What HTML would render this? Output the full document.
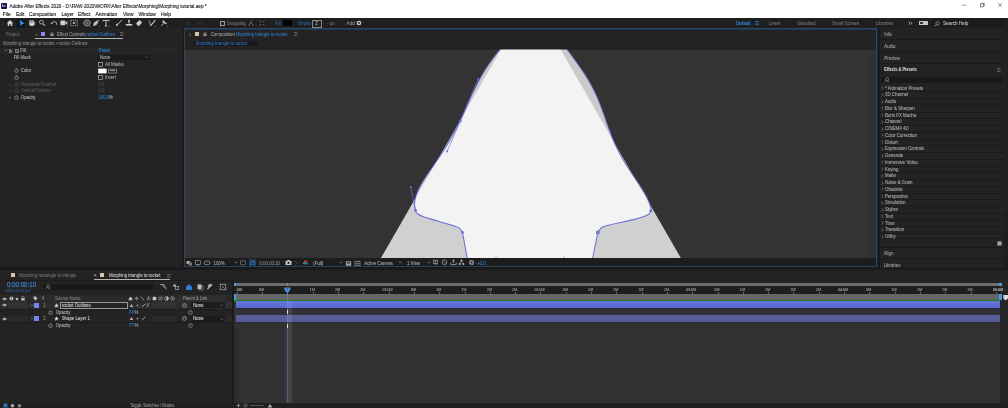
<!DOCTYPE html>
<html><head><meta charset="utf-8"><style>
html,body{margin:0;padding:0;width:1008px;height:408px;overflow:hidden;background:#1a1a1a;}
body{position:relative;font-family:"Liberation Sans",sans-serif;}
div,svg{position:absolute;box-sizing:content-box;}
.t{white-space:pre;line-height:8px;height:8px;transform:scaleY(1.15);-webkit-text-stroke:0.1px currentColor;}
</style></head><body><div style="left:0;top:0;width:1008px;height:408px;will-change:transform;overflow:hidden;filter:blur(0.22px)">
<div style="left:0px;top:0px;width:1008px;height:18px;background:#ffffff;"></div>
<div style="left:1px;top:2.5px;width:6px;height:6px;background:#22104a;border-radius:0.8px"></div>
<div class="t" style="left:1.6px;top:1.6px;font-size:3.1px;color:#b4a4ff;font-weight:bold">Ae</div>
<div class="t" style="left:9.5px;top:2.50px;font-size:4.72px;color:#1a1a1a;">Adobe After Effects 2020 - D:\RAW-2020\WORK\After Effects\Morphing\Morphing tutorial.aep *</div>
<div class="t" style="left:2.8px;top:10.50px;font-size:4.9px;color:#111111;">File</div>
<div class="t" style="left:16px;top:10.50px;font-size:4.9px;color:#111111;">Edit</div>
<div class="t" style="left:29px;top:10.50px;font-size:4.9px;color:#111111;">Composition</div>
<div class="t" style="left:61.5px;top:10.50px;font-size:4.9px;color:#111111;">Layer</div>
<div class="t" style="left:78px;top:10.50px;font-size:4.9px;color:#111111;">Effect</div>
<div class="t" style="left:95.5px;top:10.50px;font-size:4.9px;color:#111111;">Animation</div>
<div class="t" style="left:123px;top:10.50px;font-size:4.9px;color:#111111;">View</div>
<div class="t" style="left:138.5px;top:10.50px;font-size:4.9px;color:#111111;">Window</div>
<div class="t" style="left:161px;top:10.50px;font-size:4.9px;color:#111111;">Help</div>
<svg style="left:960px;top:2px" width="48" height="8" viewBox="0 0 48 8"><path d="M2 3.2H6.6" stroke="#777" stroke-width="0.7"/><rect x="20.6" y="1.9" width="3" height="3" fill="none" stroke="#444" stroke-width="0.6"/><path d="M21.4 1.2H24.3V4.1" stroke="#444" stroke-width="0.6" fill="none"/><path d="M38.2 1.2L42 5M42 1.2L38.2 5" stroke="#444" stroke-width="0.6"/></svg>
<div style="left:0px;top:18px;width:1008px;height:10.3px;background:#1f1f1f;"></div>
<div style="left:16px;top:19.4px;width:10.2px;height:8.2px;background:#121820;"></div>
<svg style="left:5.5px;top:19px" width="8" height="8" viewBox="-4 -4 8 8"><path d="M-3.3 0.2L0 -3L3.3 0.2L2.3 0.2V3H0.8V1.2H-0.8V3H-2.3V0.2Z" fill="#d0d0d0"/></svg>
<svg style="left:18px;top:19px" width="8" height="8" viewBox="-4 -4 8 8"><path d="M-2.3 -3L2.6 0.7L0.4 0.9L-1.3 3.1Z" fill="#3a92f2"/></svg>
<svg style="left:27.5px;top:19px" width="8" height="8" viewBox="-4 -4 8 8"><path d="M-2.4 -0.3V-2.2M-1.1 -0.3V-3M0.2 -0.3V-3M1.5 -0.3V-2.4" stroke="#cfcfcf" stroke-width="1"/><path d="M-2.8 -0.5H2.6V1.6L1.4 3H-1.6L-2.8 1.6Z" fill="#cfcfcf"/><path d="M2.2 0.5L3.2 -0.8" stroke="#cfcfcf" stroke-width="0.9"/></svg>
<svg style="left:37.5px;top:19px" width="8" height="8" viewBox="-4 -4 8 8"><circle cx="-0.6" cy="-0.9" r="1.9" stroke="#bdbdbd" stroke-width="0.8" fill="none"/><path d="M0.8 0.6L3 3" stroke="#bdbdbd" stroke-width="1.1"/></svg>
<svg style="left:50.3px;top:19px" width="8" height="8" viewBox="-4 -4 8 8"><path d="M-2.6 1A2.7 2.7 0 1 1 2.8 1.8" stroke="#bdbdbd" stroke-width="0.9" fill="none"/><path d="M-3.6 -0.3L-2.6 1.6L-1.2 0.2Z" fill="#bdbdbd"/></svg>
<svg style="left:60.2px;top:19px" width="8" height="8" viewBox="-4 -4 8 8"><rect x="-3.6" y="-2.4" width="5" height="4.6" rx="1" fill="#d0d0d0"/><path d="M1.2 0L3.4 -2V2Z" fill="#d0d0d0"/><circle cx="3.2" cy="3.2" r="0.5" fill="#888"/></svg>
<svg style="left:70.2px;top:19px" width="8" height="8" viewBox="-4 -4 8 8"><rect x="-3.3" y="-2.7" width="6.6" height="5.4" stroke="#bdbdbd" stroke-width="0.9" stroke-dasharray="1.2 1" fill="none"/><rect x="-1.2" y="-1" width="2.4" height="2" fill="#bdbdbd"/><rect x="-0.5" y="-0.4" width="1" height="0.8" fill="#232323"/></svg>
<svg style="left:82.5px;top:19px" width="8" height="8" viewBox="-4 -4 8 8"><path d="M-1.8 -2.8H1.8L3.4 0L1.8 2.8H-1.8L-3.4 0Z" stroke="#a8a8a8" stroke-width="0.9" fill="#3a3a3a"/><ellipse rx="1.3" ry="0.9" fill="none" stroke="#a8a8a8" stroke-width="0.5"/><circle cx="3.3" cy="3.4" r="0.5" fill="#888"/></svg>
<svg style="left:92.3px;top:19px" width="8" height="8" viewBox="-4 -4 8 8"><path d="M-3 3L-2.2 -0.2L1 -2.4L2.4 -1L0.2 2.2Z" fill="#c0c0c0"/><path d="M1.6 -2.2L2.6 -3.2L3.4 -2.4L2.4 -1.4Z" fill="#c0c0c0"/><circle cx="3" cy="3.2" r="0.5" fill="#888"/></svg>
<svg style="left:102.2px;top:19px" width="8" height="8" viewBox="-4 -4 8 8"><path d="M-3 -2.6H3M0 -2.6V3M-1.2 3H1.2M-3 -2.6V-1.6M3 -2.6V-1.6" stroke="#cfcfcf" stroke-width="0.9" fill="none"/><circle cx="3.3" cy="3.3" r="0.5" fill="#888"/></svg>
<svg style="left:115.2px;top:19px" width="8" height="8" viewBox="-4 -4 8 8"><path d="M-1.2 1.2L3.2 -3.2" stroke="#cfcfcf" stroke-width="0.9"/><path d="M-3.2 3.2Q-3 0.8 -1.6 0.6L-0.6 1.6Q-1 3 -3.2 3.2Z" fill="#cfcfcf"/></svg>
<svg style="left:125px;top:19px" width="8" height="8" viewBox="-4 -4 8 8"><circle cy="-2.3" r="1" fill="#cfcfcf"/><path d="M0 -1.5V0.6" stroke="#cfcfcf" stroke-width="1.2"/><path d="M-3.2 1H3.2V2.6H-3.2Z" fill="#cfcfcf"/></svg>
<svg style="left:135.3px;top:19px" width="8" height="8" viewBox="-4 -4 8 8"><path d="M-3 0.6L0.6 -3L3.2 -0.4L-0.4 3.2Z" fill="#cfcfcf"/><path d="M-3 0.6L-0.4 3.2" stroke="#888" stroke-width="0.6"/></svg>
<svg style="left:147.9px;top:19px" width="8" height="8" viewBox="-4 -4 8 8"><path d="M-3 -2.6L-1.2 2.4" stroke="#a0a0a0" stroke-width="0.9"/><path d="M-0.8 2.2L3.4 -3" stroke="#cfcfcf" stroke-width="1.1"/><path d="M-1.6 1.6L-0.4 2.8L-1.8 3.2Z" fill="#cfcfcf"/><circle cx="3.2" cy="3.4" r="0.5" fill="#888"/></svg>
<svg style="left:159.8px;top:19px" width="8" height="8" viewBox="-4 -4 8 8"><path d="M-1 -3L3 0.8L1.6 1.2L-0.6 -0.6L-1.8 -0.2Z" fill="#cfcfcf"/><path d="M-0.2 0.2L-2.8 2.8" stroke="#cfcfcf" stroke-width="0.8"/><circle cx="3.2" cy="3.4" r="0.5" fill="#888"/></svg>
<div style="left:2.2px;top:20px;width:0.5px;height:6.5px;background:#2e2e2e;"></div>
<div style="left:186px;top:21.5px;width:5px;height:3.5px;background:#2a2a2a;"></div>
<div style="left:197px;top:21.5px;width:5px;height:3.5px;background:#2a2a2a;"></div>
<div style="left:219.6px;top:20.8px;width:3.6px;height:3.6px;border:0.7px solid #9a9a9a"></div>
<div class="t" style="left:226.5px;top:19.70px;font-size:4.6px;color:#6a6a6a;">Snapping</div>
<svg style="left:248px;top:19.5px" width="6" height="7" viewBox="0 0 6 7"><path d="M0.5 6L3 2L5.5 6M3 1L4.5 0" stroke="#8a8a8a" stroke-width="0.7" fill="none"/></svg>
<svg style="left:258.5px;top:20px" width="6" height="6" viewBox="0 0 6 6"><path d="M0.5 0.5L2 2M5.5 0.5L4 2M0.5 5.5L2 4M5.5 5.5L4 4" stroke="#8a8a8a" stroke-width="0.7"/></svg>
<div class="t" style="left:275px;top:19.70px;font-size:4.6px;color:#2d5f98;">Fill</div>
<div style="left:283px;top:20.3px;width:9px;height:6px;background:#000000;"></div>
<div class="t" style="left:298px;top:19.70px;font-size:4.6px;color:#2d5f98;">Stroke</div>
<div style="left:312px;top:20.2px;width:8px;height:5.6px;border:0.6px solid #8a8a8a"></div>
<div class="t" style="left:315.3px;top:19.70px;font-size:4.6px;color:#b0b0b0;">2</div>
<div class="t" style="left:327px;top:19.70px;font-size:4.6px;color:#6a6a6a;">- px</div>
<div class="t" style="left:346.6px;top:19.70px;font-size:4.6px;color:#8a8a8a;">Add:</div>
<svg style="left:355.5px;top:20px" width="6" height="6" viewBox="0 0 6 6"><circle cx="3" cy="3" r="2.3" fill="#c8c8c8"/><circle cx="3" cy="3" r="0.9" fill="#232323"/></svg>
<div class="t" style="left:736px;top:19.70px;font-size:4.6px;color:#2f8ae6;">Default</div>
<svg style="left:755px;top:21px" width="4" height="4" viewBox="0 0 4 4"><path d="M0 0.5H4M0 2H4M0 3.5H4" stroke="#2f8ae6" stroke-width="0.6"/></svg>
<div class="t" style="left:768.8px;top:19.70px;font-size:4.6px;color:#6e6e6e;">Learn</div>
<div class="t" style="left:797px;top:19.70px;font-size:4.6px;color:#6e6e6e;">Standard</div>
<div class="t" style="left:832px;top:19.70px;font-size:4.6px;color:#6e6e6e;">Small Screen</div>
<div class="t" style="left:875.8px;top:19.70px;font-size:4.6px;color:#6e6e6e;">Libraries</div>
<svg style="left:908px;top:20.5px" width="5" height="5" viewBox="0 0 5 5"><path d="M0.6 0.8L2 2.2L0.6 3.6M2.6 0.8L4 2.2L2.6 3.6" stroke="#d8d8d8" stroke-width="0.7" fill="none"/></svg>
<div style="left:918.7px;top:21px;width:9px;height:4.2px;background:#c8c8c8;border-radius:0.5px"></div>
<div style="left:920.2px;top:21.8px;width:3px;height:2.6px;background:#333;"></div>
<div style="left:932px;top:19.3px;width:72px;height:8px;background:#1b1b1b;"></div>
<svg style="left:933.5px;top:20.5px" width="6" height="6" viewBox="0 0 6 6"><circle cx="3.6" cy="2.4" r="1.7" stroke="#bdbdbd" stroke-width="0.6" fill="none"/><path d="M2.4 3.6L0.6 5.4" stroke="#bdbdbd" stroke-width="0.7"/></svg>
<div class="t" style="left:943px;top:19.70px;font-size:4.6px;color:#bdbdbd;">Search Help</div>
<div style="left:0px;top:28.3px;width:183px;height:239.2px;background:#232323;"></div>
<div style="left:176px;top:39px;width:2px;height:228.5px;background:#25262a;"></div>
<div style="left:183px;top:28.3px;width:1px;height:239.2px;background:#161616;"></div>
<div class="t" style="left:5.7px;top:30.70px;font-size:4.5px;color:#666666;">Project</div>
<div class="t" style="left:35.8px;top:30.30px;font-size:5px;color:#8a8a8a;">&#8250;</div>
<div style="left:41.4px;top:32px;width:3.3px;height:3.6px;background:#8c88e8;"></div>
<svg style="left:49.5px;top:31.6px" width="4" height="4.5" viewBox="0 0 4 4.5"><rect x="0.5" y="1.6" width="3" height="2.6" fill="#9a9a9a"/><path d="M1 1.8V0.9A1 1 0 0 1 3 0.9V1.8" stroke="#9a9a9a" stroke-width="0.5" fill="none"/></svg>
<div class="t" style="left:57px;top:30.70px;font-size:4.35px;color:#8f8f8f;">Effect Controls </div>
<div class="t" style="left:86.2px;top:30.70px;font-size:4.35px;color:#3570b8;">rocket Outlines</div>
<svg style="left:119.8px;top:32px" width="4" height="4" viewBox="0 0 4 4"><path d="M0 0.5H3.5M0 2H3.5M0 3.5H3.5" stroke="#777" stroke-width="0.6"/></svg>
<div style="left:35px;top:38.1px;width:88px;height:0.7px;background:#b4b4b4;"></div>
<div style="left:0px;top:39px;width:176px;height:8px;background:#232323;"></div>
<div class="t" style="left:3px;top:40.20px;font-size:4.35px;color:#7e7e7e;">Morphing triangle to rocket &#8226; rocket Outlines</div>
<div style="left:0px;top:47px;width:176px;height:0.6px;background:#1e1e1e;"></div>
<div style="left:0px;top:47.5px;width:176px;height:6.2px;background:#262626;"></div>
<svg style="left:3.7px;top:48.7px" width="4" height="3" viewBox="0 0 4 3"><path d="M0.6 0.6L2 2.1L3.4 0.6" stroke="#9a9a9a" stroke-width="0.6" fill="none"/></svg>
<div class="t" style="left:8.7px;top:47.10px;font-size:5px;color:#b0b0b0;"><i>fx</i></div>
<svg style="left:15px;top:48.5px" width="4" height="4" viewBox="0 0 4 4"><rect x="0.3" y="0.8" width="3.4" height="2.8" fill="none" stroke="#b0b0b0" stroke-width="0.6"/><path d="M2 0.8V3.6" stroke="#b0b0b0" stroke-width="0.5"/></svg>
<div class="t" style="left:20.2px;top:47.10px;font-size:4.35px;color:#a8a8a8;">Fill</div>
<div class="t" style="left:98.5px;top:47.10px;font-size:4.35px;color:#2f7ed0;">Reset</div>
<div class="t" style="left:13.7px;top:53.90px;font-size:4.35px;color:#a8a8a8;">Fill Mask</div>
<div style="left:98px;top:55.2px;width:52px;height:4.8px;background:#1b1b1b;"></div>
<div class="t" style="left:100px;top:54.10px;font-size:4.35px;color:#a8a8a8;">None</div>
<svg style="left:144.5px;top:56.2px" width="3" height="2.5" viewBox="0 0 3 2.5"><path d="M0.3 0.5L1.5 1.8L2.7 0.5" stroke="#9a9a9a" stroke-width="0.5" fill="none"/></svg>
<svg style="left:98px;top:61.8px" width="5" height="5" viewBox="0 0 5 5"><rect x="0.6" y="0.6" width="3.8" height="3.8" fill="none" stroke="#b0b0b0" stroke-width="0.7"/></svg>
<div class="t" style="left:105px;top:60.70px;font-size:4.35px;color:#a0a0a0;">All Masks</div>
<svg style="left:14.0px;top:68.3px" width="5" height="5" viewBox="0 0 5 5"><circle cx="2.5" cy="2.8" r="1.8" fill="none" stroke="#b0b0b0" stroke-width="0.6"/><path d="M2.5 0.4V1M2.5 2.8L3.3 2.1" stroke="#b0b0b0" stroke-width="0.6"/></svg>
<div class="t" style="left:20.8px;top:67.30px;font-size:4.35px;color:#a8a8a8;">Color</div>
<svg style="left:98px;top:68px" width="20" height="6" viewBox="0 0 20 6"><rect x="0.2" y="0.6" width="8.4" height="4.8" fill="#ffffff"/><rect x="10.6" y="1.2" width="7.8" height="3.8" fill="none" stroke="#a8a8a8" stroke-width="0.6"/><path d="M12 2.6H17" stroke="#a8a8a8" stroke-width="0.9"/></svg>
<svg style="left:14.0px;top:75.0px" width="5" height="5" viewBox="0 0 5 5"><circle cx="2.5" cy="2.8" r="1.8" fill="none" stroke="#b0b0b0" stroke-width="0.6"/><path d="M2.5 0.4V1M2.5 2.8L3.3 2.1" stroke="#b0b0b0" stroke-width="0.6"/></svg>
<svg style="left:98px;top:75.2px" width="5" height="5" viewBox="0 0 5 5"><rect x="0.6" y="0.6" width="3.8" height="3.8" fill="none" stroke="#b0b0b0" stroke-width="0.7"/></svg>
<div class="t" style="left:105px;top:74.10px;font-size:4.35px;color:#a0a0a0;">Invert</div>
<div class="t" style="left:9.2px;top:80.70px;font-size:4.5px;color:#5a5a5a;">&#8250;</div>
<svg style="left:14.0px;top:81.9px" width="5" height="5" viewBox="0 0 5 5"><circle cx="2.5" cy="2.8" r="1.8" fill="none" stroke="#555" stroke-width="0.6"/><path d="M2.5 0.4V1M2.5 2.8L3.3 2.1" stroke="#555" stroke-width="0.6"/></svg>
<div class="t" style="left:20.8px;top:80.90px;font-size:4.35px;color:#555555;">Horizontal Feather</div>
<div class="t" style="left:98.5px;top:80.90px;font-size:4.35px;color:#4e4e4e;">0.0</div>
<div class="t" style="left:9.2px;top:87.30px;font-size:4.5px;color:#5a5a5a;">&#8250;</div>
<svg style="left:14.0px;top:88.4px" width="5" height="5" viewBox="0 0 5 5"><circle cx="2.5" cy="2.8" r="1.8" fill="none" stroke="#555" stroke-width="0.6"/><path d="M2.5 0.4V1M2.5 2.8L3.3 2.1" stroke="#555" stroke-width="0.6"/></svg>
<div class="t" style="left:20.8px;top:87.40px;font-size:4.35px;color:#555555;">Vertical Feather</div>
<div class="t" style="left:98.5px;top:87.40px;font-size:4.35px;color:#4e4e4e;">0.0</div>
<div class="t" style="left:9.2px;top:93.70px;font-size:4.5px;color:#a0a0a0;">&#8250;</div>
<svg style="left:14.0px;top:94.9px" width="5" height="5" viewBox="0 0 5 5"><circle cx="2.5" cy="2.8" r="1.8" fill="none" stroke="#b0b0b0" stroke-width="0.6"/><path d="M2.5 0.4V1M2.5 2.8L3.3 2.1" stroke="#b0b0b0" stroke-width="0.6"/></svg>
<div class="t" style="left:20.8px;top:93.90px;font-size:4.35px;color:#a8a8a8;">Opacity</div>
<div class="t" style="left:98.3px;top:93.90px;font-size:4.35px;color:#2f7ed0;">100.0</div>
<div class="t" style="left:109px;top:93.90px;font-size:4.35px;color:#a0a0a0;">%</div>
<div style="left:184px;top:28px;width:693px;height:239px;background:#232323;"></div>
<div class="t" style="left:189.3px;top:30.30px;font-size:5px;color:#8a8a8a;">&#8250;</div>
<div style="left:195.4px;top:32px;width:3.4px;height:3.6px;background:#d8c6a8;"></div>
<svg style="left:203px;top:31.6px" width="4" height="4.5" viewBox="0 0 4 4.5"><rect x="0.5" y="1.6" width="3" height="2.6" fill="#9a9a9a"/><path d="M1 1.8V0.9A1 1 0 0 1 3 0.9V1.8" stroke="#9a9a9a" stroke-width="0.5" fill="none"/></svg>
<div class="t" style="left:210.7px;top:30.50px;font-size:4.35px;color:#8f8f8f;">Composition </div>
<div class="t" style="left:236px;top:30.50px;font-size:4.35px;color:#3570b8;">Morphing triangle to rocket</div>
<svg style="left:293.5px;top:32px" width="4" height="4" viewBox="0 0 4 4"><path d="M0 0.5H3.5M0 2H3.5M0 3.5H3.5" stroke="#777" stroke-width="0.6"/></svg>
<div style="left:193px;top:41.4px;width:65px;height:5px;background:#191919;"></div>
<div class="t" style="left:195.8px;top:40.30px;font-size:4.35px;color:#2e66b0;">Morphing triangle to rocket</div>
<div style="left:185px;top:49.5px;width:691px;height:208.8px;background:#333436;"></div>
<div style="left:190px;top:49.5px;width:680.4px;height:208.8px;background:#333333;"></div>
<div style="left:870.4px;top:49.5px;width:5.4px;height:208.8px;background:#303030;"></div>
<svg style="left:0;top:0" width="1008" height="408" viewBox="0 0 1008 408">
<defs><filter id="bl" x="-1%" y="-1%" width="102%" height="102%"><feGaussianBlur stdDeviation="0.35"/></filter><clipPath id="vc"><rect x="190" y="49.5" width="678" height="208.8"/></clipPath></defs>
<g clip-path="url(#vc)"><g filter="url(#bl)">
<path d="M530.8 -2.2 L380.8 258.3 L681 258.3 Z" fill="#ffffff" fill-opacity="0.77"/>
<path d="M507.75 40.00 L506.52 41.50 L505.28 43.00 L504.05 44.50 L502.82 46.00 L501.59 47.50 L500.35 49.00 L499.12 50.50 L497.91 52.00 L496.71 53.50 L495.54 55.00 L494.39 56.50 L493.26 58.00 L492.15 59.50 L491.06 61.00 L490.00 62.50 L488.96 64.00 L487.94 65.50 L486.94 67.00 L485.97 68.50 L485.01 70.00 L484.08 71.50 L483.17 73.00 L482.27 74.50 L481.40 76.00 L480.55 77.50 L479.71 79.00 L478.89 80.50 L478.09 82.00 L477.31 83.50 L476.54 85.00 L475.78 86.50 L475.04 88.00 L474.31 89.50 L473.59 91.00 L472.88 92.50 L472.18 94.00 L471.49 95.50 L470.80 97.00 L470.13 98.50 L469.46 100.00 L468.79 101.50 L468.12 103.00 L467.46 104.50 L466.80 106.00 L466.14 107.50 L465.48 109.00 L464.81 110.50 L464.14 112.00 L463.47 113.50 L462.80 115.00 L462.12 116.50 L461.43 118.00 L460.73 119.50 L460.03 121.00 L459.31 122.50 L458.59 124.00 L457.85 125.50 L457.11 127.00 L456.35 128.50 L455.58 130.00 L454.79 131.50 L454.00 133.00 L453.19 134.50 L452.36 136.00 L451.52 137.50 L450.67 139.00 L449.80 140.50 L448.92 142.00 L448.02 143.50 L447.11 145.00 L446.18 146.50 L445.24 148.00 L444.29 149.50 L443.32 151.00 L442.35 152.50 L441.36 154.00 L440.36 155.50 L439.35 157.00 L438.33 158.50 L437.30 160.00 L436.27 161.50 L435.24 163.00 L434.20 164.50 L433.16 166.00 L432.12 167.50 L431.08 169.00 L430.05 170.50 L429.02 172.00 L428.01 173.50 L427.00 175.00 L426.01 176.50 L425.04 178.00 L424.08 179.50 L423.15 181.00 L422.25 182.50 L421.37 184.00 L420.53 185.50 L419.73 187.00 L418.96 188.50 L418.25 190.00 L417.58 191.50 L416.97 193.00 L416.41 194.50 L415.92 196.00 L415.50 197.50 L415.15 199.00 L414.89 200.50 L414.71 202.00 L414.61 203.50 L414.62 205.00 L414.73 206.50 L414.95 208.00 L415.29 209.50 L415.40 210.30 C415.73 210.87 415.85 212.55 417.40 213.70 C418.95 214.85 421.85 216.13 424.70 217.20 C427.55 218.27 431.23 219.13 434.50 220.10 C437.77 221.07 441.03 222.02 444.30 223.00 C447.57 223.98 451.57 225.10 454.10 226.00 C456.63 226.90 458.10 227.33 459.50 228.40 C460.90 229.47 462.00 231.73 462.50 232.40 L467.2 262 L592.6 262 L597.8 232.4 C598.47 231.58 599.83 228.73 601.80 227.50 C603.77 226.27 606.67 225.80 609.60 225.00 C612.53 224.20 616.13 223.43 619.40 222.70 C622.67 221.97 625.93 221.37 629.20 220.60 C632.47 219.83 635.73 219.17 639.00 218.10 C642.27 217.03 646.83 215.42 648.80 214.20 C650.77 212.98 650.47 211.37 650.80 210.80 L650.98 209.50 L650.75 208.00 L650.43 206.50 L650.03 205.00 L649.55 203.50 L649.00 202.00 L648.38 200.50 L647.70 199.00 L646.98 197.50 L646.20 196.00 L645.38 194.50 L644.52 193.00 L643.63 191.50 L642.71 190.00 L641.77 188.50 L640.81 187.00 L639.82 185.50 L638.83 184.00 L637.83 182.50 L636.82 181.00 L635.80 179.50 L634.79 178.00 L633.77 176.50 L632.76 175.00 L631.76 173.50 L630.76 172.00 L629.77 170.50 L628.80 169.00 L627.83 167.50 L626.88 166.00 L625.95 164.50 L625.03 163.00 L624.13 161.50 L623.25 160.00 L622.38 158.50 L621.53 157.00 L620.71 155.50 L619.90 154.00 L619.11 152.50 L618.34 151.00 L617.59 149.50 L616.86 148.00 L616.14 146.50 L615.45 145.00 L614.77 143.50 L614.11 142.00 L613.47 140.50 L612.84 139.00 L612.22 137.50 L611.62 136.00 L611.04 134.50 L610.46 133.00 L609.90 131.50 L609.34 130.00 L608.80 128.50 L608.26 127.00 L607.73 125.50 L607.20 124.00 L606.67 122.50 L606.15 121.00 L605.63 119.50 L605.11 118.00 L604.59 116.50 L604.07 115.00 L603.54 113.50 L603.00 112.00 L602.46 110.50 L601.91 109.00 L601.35 107.50 L600.79 106.00 L600.21 104.50 L599.61 103.00 L599.01 101.50 L598.39 100.00 L597.75 98.50 L597.10 97.00 L596.43 95.50 L595.74 94.00 L595.03 92.50 L594.31 91.00 L593.56 89.50 L592.79 88.00 L592.00 86.50 L591.20 85.00 L590.37 83.50 L589.51 82.00 L588.64 80.50 L587.75 79.00 L586.83 77.50 L585.90 76.00 L584.94 74.50 L583.97 73.00 L582.97 71.50 L581.96 70.00 L580.94 68.50 L579.89 67.00 L578.84 65.50 L577.77 64.00 L576.69 62.50 L575.61 61.00 L574.51 59.50 L573.42 58.00 L572.32 56.50 L571.22 55.00 L570.13 53.50 L569.04 52.00 L567.97 50.50 L566.90 49.00 L565.84 47.50 L564.77 46.00 L563.71 44.50 L562.64 43.00 L561.58 41.50 L560.52 40.00 Z" fill="#ffffff" fill-opacity="0.74"/>
<path d="M507.75 40.00 L506.52 41.50 L505.28 43.00 L504.05 44.50 L502.82 46.00 L501.59 47.50 L500.35 49.00 L499.12 50.50 L497.91 52.00 L496.71 53.50 L495.54 55.00 L494.39 56.50 L493.26 58.00 L492.15 59.50 L491.06 61.00 L490.00 62.50 L488.96 64.00 L487.94 65.50 L486.94 67.00 L485.97 68.50 L485.01 70.00 L484.08 71.50 L483.17 73.00 L482.27 74.50 L481.40 76.00 L480.55 77.50 L479.71 79.00 L478.89 80.50 L478.09 82.00 L477.31 83.50 L476.54 85.00 L475.78 86.50 L475.04 88.00 L474.31 89.50 L473.59 91.00 L472.88 92.50 L472.18 94.00 L471.49 95.50 L470.80 97.00 L470.13 98.50 L469.46 100.00 L468.79 101.50 L468.12 103.00 L467.46 104.50 L466.80 106.00 L466.14 107.50 L465.48 109.00 L464.81 110.50 L464.14 112.00 L463.47 113.50 L462.80 115.00 L462.12 116.50 L461.43 118.00 L460.73 119.50 L460.03 121.00 L459.31 122.50 L458.59 124.00 L457.85 125.50 L457.11 127.00 L456.35 128.50 L455.58 130.00 L454.79 131.50 L454.00 133.00 L453.19 134.50 L452.36 136.00 L451.52 137.50 L450.67 139.00 L449.80 140.50 L448.92 142.00 L448.02 143.50 L447.11 145.00 L446.18 146.50 L445.24 148.00 L444.29 149.50 L443.32 151.00 L442.35 152.50 L441.36 154.00 L440.36 155.50 L439.35 157.00 L438.33 158.50 L437.30 160.00 L436.27 161.50 L435.24 163.00 L434.20 164.50 L433.16 166.00 L432.12 167.50 L431.08 169.00 L430.05 170.50 L429.02 172.00 L428.01 173.50 L427.00 175.00 L426.01 176.50 L425.04 178.00 L424.08 179.50 L423.15 181.00 L422.25 182.50 L421.37 184.00 L420.53 185.50 L419.73 187.00 L418.96 188.50 L418.25 190.00 L417.58 191.50 L416.97 193.00 L416.41 194.50 L415.92 196.00 L415.50 197.50 L415.15 199.00 L414.89 200.50 L414.71 202.00 L414.61 203.50 L414.62 205.00 L414.73 206.50 L414.95 208.00 L415.29 209.50 L415.40 210.30 C415.73 210.87 415.85 212.55 417.40 213.70 C418.95 214.85 421.85 216.13 424.70 217.20 C427.55 218.27 431.23 219.13 434.50 220.10 C437.77 221.07 441.03 222.02 444.30 223.00 C447.57 223.98 451.57 225.10 454.10 226.00 C456.63 226.90 458.10 227.33 459.50 228.40 C460.90 229.47 462.00 231.73 462.50 232.40 L467.2 258.3 M592.6 258.3 L597.8 232.4 C598.47 231.58 599.83 228.73 601.80 227.50 C603.77 226.27 606.67 225.80 609.60 225.00 C612.53 224.20 616.13 223.43 619.40 222.70 C622.67 221.97 625.93 221.37 629.20 220.60 C632.47 219.83 635.73 219.17 639.00 218.10 C642.27 217.03 646.83 215.42 648.80 214.20 C650.77 212.98 650.47 211.37 650.80 210.80 L650.98 209.50 L650.75 208.00 L650.43 206.50 L650.03 205.00 L649.55 203.50 L649.00 202.00 L648.38 200.50 L647.70 199.00 L646.98 197.50 L646.20 196.00 L645.38 194.50 L644.52 193.00 L643.63 191.50 L642.71 190.00 L641.77 188.50 L640.81 187.00 L639.82 185.50 L638.83 184.00 L637.83 182.50 L636.82 181.00 L635.80 179.50 L634.79 178.00 L633.77 176.50 L632.76 175.00 L631.76 173.50 L630.76 172.00 L629.77 170.50 L628.80 169.00 L627.83 167.50 L626.88 166.00 L625.95 164.50 L625.03 163.00 L624.13 161.50 L623.25 160.00 L622.38 158.50 L621.53 157.00 L620.71 155.50 L619.90 154.00 L619.11 152.50 L618.34 151.00 L617.59 149.50 L616.86 148.00 L616.14 146.50 L615.45 145.00 L614.77 143.50 L614.11 142.00 L613.47 140.50 L612.84 139.00 L612.22 137.50 L611.62 136.00 L611.04 134.50 L610.46 133.00 L609.90 131.50 L609.34 130.00 L608.80 128.50 L608.26 127.00 L607.73 125.50 L607.20 124.00 L606.67 122.50 L606.15 121.00 L605.63 119.50 L605.11 118.00 L604.59 116.50 L604.07 115.00 L603.54 113.50 L603.00 112.00 L602.46 110.50 L601.91 109.00 L601.35 107.50 L600.79 106.00 L600.21 104.50 L599.61 103.00 L599.01 101.50 L598.39 100.00 L597.75 98.50 L597.10 97.00 L596.43 95.50 L595.74 94.00 L595.03 92.50 L594.31 91.00 L593.56 89.50 L592.79 88.00 L592.00 86.50 L591.20 85.00 L590.37 83.50 L589.51 82.00 L588.64 80.50 L587.75 79.00 L586.83 77.50 L585.90 76.00 L584.94 74.50 L583.97 73.00 L582.97 71.50 L581.96 70.00 L580.94 68.50 L579.89 67.00 L578.84 65.50 L577.77 64.00 L576.69 62.50 L575.61 61.00 L574.51 59.50 L573.42 58.00 L572.32 56.50 L571.22 55.00 L570.13 53.50 L569.04 52.00 L567.97 50.50 L566.90 49.00 L565.84 47.50 L564.77 46.00 L563.71 44.50 L562.64 43.00 L561.58 41.50 L560.52 40.00" fill="none" stroke="#4f58d0" stroke-opacity="0.8" stroke-width="1.1"/>
<path d="M460.4 121L478 79.3M460.4 121L447 151.5M415.4 210.3L410.8 187" stroke="#6b72d4" stroke-width="0.7"/>
<circle cx="478" cy="79.3" r="1" fill="#6b72d4"/><circle cx="447" cy="151.5" r="1" fill="#6b72d4"/><circle cx="410.8" cy="187" r="1" fill="#6b72d4"/>
<circle cx="460.4" cy="121" r="1.4" fill="#6b72d4"/><circle cx="415.6" cy="210.4" r="1.4" fill="#6b72d4"/><circle cx="462.5" cy="232.4" r="1.4" fill="#6b72d4"/>
<circle cx="650.8" cy="210.8" r="1.5" fill="#6b72d4"/><circle cx="610.3" cy="131.2" r="0.8" fill="#6b72d4"/>
<rect x="596.1" y="230.7" width="3.5" height="3.5" fill="#6b72d4"/><path d="M496 258.3V256.6M564.3 258.3V256.6" stroke="#8a8a8a" stroke-width="0.8"/>
</g></g></svg>
<div style="left:185px;top:258.3px;width:691px;height:8.3px;background:#1d1d1d;"></div>
<svg style="left:185px;top:258.8px" width="8" height="8" viewBox="-4 -4 8 8"><rect x="-2.5" y="-2" width="3.5" height="3" fill="#aaa"/><rect x="-0.5" y="-0.5" width="3.5" height="3" fill="#777"/></svg>
<svg style="left:194px;top:258.8px" width="8" height="8" viewBox="-4 -4 8 8"><rect x="-2.5" y="-2.3" width="5" height="3.6" fill="none" stroke="#aaa" stroke-width="0.6"/><path d="M-1 2.3H1" stroke="#aaa" stroke-width="0.6"/></svg>
<svg style="left:202.8px;top:258.8px" width="8" height="8" viewBox="-4 -4 8 8"><rect x="-2.8" y="-1.8" width="5.6" height="3.4" rx="1.5" fill="none" stroke="#aaa" stroke-width="0.7"/></svg>
<svg style="left:239px;top:258.8px" width="8" height="8" viewBox="-4 -4 8 8"><rect x="-2.5" y="-2.2" width="5" height="4" rx="1" fill="none" stroke="#999" stroke-width="0.6"/></svg>
<div class="t" style="left:213.5px;top:259.70px;font-size:4.35px;color:#a0a0a0;">100%</div>
<svg style="left:234.2px;top:261.2px" width="4" height="3" viewBox="0 0 4 3"><path d="M0.6 0.6L2 2.1L3.4 0.6" stroke="#a0a0a0" stroke-width="0.6" fill="none"/></svg>
<div style="left:248.8px;top:259.4px;width:7.2px;height:6.6px;background:#1f3a57;"></div>
<svg style="left:250px;top:260.6px" width="5" height="4.5" viewBox="0 0 5 4.5"><path d="M0.5 4V1.5L2 0.5H4.5V4Z" fill="none" stroke="#3b9cf0" stroke-width="0.6"/></svg>
<div class="t" style="left:259.5px;top:259.70px;font-size:4.35px;color:#7d8894;">0:00:00:10</div>
<svg style="left:284.5px;top:259.3px" width="7" height="7" viewBox="0 0 7 7"><path d="M0.5 2H2L2.6 1H4.4L5 2H6.5V6H0.5Z" fill="#c8c8c8"/><circle cx="3.5" cy="3.9" r="1.1" fill="#1d1d1d"/></svg>
<svg style="left:293.2px;top:259.5px" width="7" height="7" viewBox="0 0 7 7"><path d="M1.5 5.5L5.5 1.5M1.5 1.5H3M4 5.5H5.5" stroke="#555" stroke-width="0.6"/></svg>
<svg style="left:301.9px;top:259.3px" width="7" height="7" viewBox="0 0 7 7"><circle cx="3.5" cy="2.2" r="1.3" fill="#c33"/><circle cx="2.3" cy="4.3" r="1.3" fill="#3a3"/><circle cx="4.7" cy="4.3" r="1.3" fill="#36c"/></svg>
<div class="t" style="left:313.3px;top:259.70px;font-size:4.35px;color:#a8a8a8;">(Full)</div>
<svg style="left:339.4px;top:261.0px" width="4" height="3" viewBox="0 0 4 3"><path d="M0.6 0.6L2 2.1L3.4 0.6" stroke="#a0a0a0" stroke-width="0.6" fill="none"/></svg>
<svg style="left:344.8px;top:259.5px" width="7" height="7" viewBox="0 0 7 7"><rect x="0.8" y="1.2" width="5.4" height="4.6" fill="#9a9a9a"/><rect x="1.8" y="2" width="3.4" height="1.6" fill="#444"/></svg>
<svg style="left:353.5px;top:259.5px" width="7" height="7" viewBox="0 0 7 7"><rect x="1" y="1.2" width="5" height="4.6" fill="none" stroke="#aaa" stroke-width="0.6"/><path d="M1 3.5H6M3.5 1.2V5.8" stroke="#aaa" stroke-width="0.4"/></svg>
<div class="t" style="left:364.3px;top:259.70px;font-size:4.35px;color:#a0a0a0;">Active Camera</div>
<svg style="left:398.2px;top:261.2px" width="4" height="3" viewBox="0 0 4 3"><path d="M0.6 0.6L2 2.1L3.4 0.6" stroke="#a0a0a0" stroke-width="0.6" fill="none"/></svg>
<div class="t" style="left:407px;top:259.70px;font-size:4.35px;color:#a0a0a0;">1 View</div>
<svg style="left:426.7px;top:261.2px" width="4" height="3" viewBox="0 0 4 3"><path d="M0.6 0.6L2 2.1L3.4 0.6" stroke="#a0a0a0" stroke-width="0.6" fill="none"/></svg>
<svg style="left:432.1px;top:259.3px" width="7" height="7" viewBox="0 0 7 7"><path d="M0.8 1.2H6.2M1.5 1.2V4.5H5.5V1.2M2.5 5.8L3.5 4.5L4.5 5.8" stroke="#bbb" stroke-width="0.6" fill="none"/><circle cx="3.5" cy="2.8" r="0.7" fill="#bbb"/></svg>
<svg style="left:441.1px;top:259.3px" width="7" height="7" viewBox="0 0 7 7"><circle cx="3.5" cy="3.3" r="2.4" fill="none" stroke="#bbb" stroke-width="0.6"/><path d="M2.5 2.5L4.5 4.2" stroke="#bbb" stroke-width="0.6"/></svg>
<svg style="left:449.5px;top:259.3px" width="7" height="7" viewBox="0 0 7 7"><path d="M0.8 3.5V5.6H6.2V3.5M3.5 4V0.8M2.2 2L3.5 0.8L4.8 2" stroke="#bbb" stroke-width="0.7" fill="none"/></svg>
<svg style="left:457.9px;top:259.3px" width="7" height="7" viewBox="0 0 7 7"><circle cx="3.5" cy="1.6" r="1" fill="#bbb"/><circle cx="1.6" cy="5" r="1" fill="#bbb"/><circle cx="5.4" cy="5" r="1" fill="#bbb"/><path d="M3.5 1.6L1.6 5M3.5 1.6L5.4 5" stroke="#bbb" stroke-width="0.5"/></svg>
<svg style="left:467.5px;top:259.3px" width="7" height="7" viewBox="0 0 7 7"><circle cx="3.5" cy="3.5" r="2" fill="none" stroke="#bbb" stroke-width="1.2" stroke-dasharray="0.9 0.5"/><circle cx="3.5" cy="3.5" r="1.2" fill="none" stroke="#bbb" stroke-width="0.6"/></svg>
<div class="t" style="left:477px;top:259.70px;font-size:4.35px;color:#2f7ed0;">+0.0</div>
<div style="left:184px;top:28px;width:693px;height:1px;background:#2b4964;"></div>
<div style="left:184px;top:29px;width:693px;height:1px;background:#1f3850;"></div>
<div style="left:184px;top:28px;width:1px;height:239px;background:#334050;"></div>
<div style="left:185px;top:49.5px;width:1px;height:209px;background:#363d45;"></div>
<div style="left:876px;top:28px;width:1px;height:239px;background:#2b4a68;"></div>
<div style="left:877px;top:28px;width:1px;height:239px;background:#14283c;"></div>
<div style="left:184px;top:266px;width:693px;height:1px;background:#24425e;"></div>
<div style="left:880px;top:28.3px;width:124px;height:10.3px;background:#232323;"></div>
<div class="t" style="left:884.3px;top:30.70px;font-size:4.35px;color:#9c9c9c;">Info</div>
<div style="left:880px;top:39.5px;width:124px;height:11.5px;background:#232323;"></div>
<div class="t" style="left:884.3px;top:42.50px;font-size:4.35px;color:#9c9c9c;">Audio</div>
<div style="left:880px;top:51.8px;width:124px;height:11.3px;background:#232323;"></div>
<div class="t" style="left:884.3px;top:54.50px;font-size:4.35px;color:#9c9c9c;">Preview</div>
<div style="left:880px;top:63.8px;width:124px;height:174.6px;background:#232323;"></div>
<div class="t" style="left:884.3px;top:66.00px;font-size:3.95px;color:#d0d0d0;font-weight:bold">Effects &amp; Presets</div>
<svg style="left:996.5px;top:67.5px" width="4" height="4" viewBox="0 0 4 4"><path d="M0 0.5H3.5M0 2H3.5M0 3.5H3.5" stroke="#777" stroke-width="0.6"/></svg>
<div style="left:881px;top:76.8px;width:121px;height:6.4px;background:#191919;"></div>
<svg style="left:884px;top:77px" width="6" height="6" viewBox="0 0 6 6"><circle cx="3.2" cy="2.3" r="1.5" stroke="#bdbdbd" stroke-width="0.5" fill="none"/><path d="M2.2 3.3L0.8 4.8M3.5 4.8H5" stroke="#bdbdbd" stroke-width="0.6"/></svg>
<div style="left:880px;top:91.3px;width:124px;height:0.4px;background:#1c1c1c;"></div>
<svg style="left:880.6px;top:86.1px" width="3" height="4" viewBox="0 0 3 4"><path d="M0.8 0.6L2.2 2L0.8 3.4" stroke="#9a9a9a" stroke-width="0.55" fill="none"/></svg>
<div class="t" style="left:885px;top:84.60px;font-size:4.4px;color:#a4a4a4;">* Animation Presets</div>
<div style="left:880px;top:98.05px;width:124px;height:0.4px;background:#1c1c1c;"></div>
<svg style="left:880.6px;top:92.85px" width="3" height="4" viewBox="0 0 3 4"><path d="M0.8 0.6L2.2 2L0.8 3.4" stroke="#9a9a9a" stroke-width="0.55" fill="none"/></svg>
<div class="t" style="left:885px;top:91.35px;font-size:4.4px;color:#a4a4a4;">3D Channel</div>
<div style="left:880px;top:104.8px;width:124px;height:0.4px;background:#1c1c1c;"></div>
<svg style="left:880.6px;top:99.6px" width="3" height="4" viewBox="0 0 3 4"><path d="M0.8 0.6L2.2 2L0.8 3.4" stroke="#9a9a9a" stroke-width="0.55" fill="none"/></svg>
<div class="t" style="left:885px;top:98.10px;font-size:4.4px;color:#a4a4a4;">Audio</div>
<div style="left:880px;top:111.55px;width:124px;height:0.4px;background:#1c1c1c;"></div>
<svg style="left:880.6px;top:106.35px" width="3" height="4" viewBox="0 0 3 4"><path d="M0.8 0.6L2.2 2L0.8 3.4" stroke="#9a9a9a" stroke-width="0.55" fill="none"/></svg>
<div class="t" style="left:885px;top:104.85px;font-size:4.4px;color:#a4a4a4;">Blur &amp; Sharpen</div>
<div style="left:880px;top:118.3px;width:124px;height:0.4px;background:#1c1c1c;"></div>
<svg style="left:880.6px;top:113.1px" width="3" height="4" viewBox="0 0 3 4"><path d="M0.8 0.6L2.2 2L0.8 3.4" stroke="#9a9a9a" stroke-width="0.55" fill="none"/></svg>
<div class="t" style="left:885px;top:111.60px;font-size:4.4px;color:#a4a4a4;">Boris FX Mocha</div>
<div style="left:880px;top:125.05px;width:124px;height:0.4px;background:#1c1c1c;"></div>
<svg style="left:880.6px;top:119.85px" width="3" height="4" viewBox="0 0 3 4"><path d="M0.8 0.6L2.2 2L0.8 3.4" stroke="#9a9a9a" stroke-width="0.55" fill="none"/></svg>
<div class="t" style="left:885px;top:118.35px;font-size:4.4px;color:#a4a4a4;">Channel</div>
<div style="left:880px;top:131.79999999999998px;width:124px;height:0.4px;background:#1c1c1c;"></div>
<svg style="left:880.6px;top:126.6px" width="3" height="4" viewBox="0 0 3 4"><path d="M0.8 0.6L2.2 2L0.8 3.4" stroke="#9a9a9a" stroke-width="0.55" fill="none"/></svg>
<div class="t" style="left:885px;top:125.10px;font-size:4.4px;color:#a4a4a4;">CINEMA 4D</div>
<div style="left:880px;top:138.54999999999998px;width:124px;height:0.4px;background:#1c1c1c;"></div>
<svg style="left:880.6px;top:133.35px" width="3" height="4" viewBox="0 0 3 4"><path d="M0.8 0.6L2.2 2L0.8 3.4" stroke="#9a9a9a" stroke-width="0.55" fill="none"/></svg>
<div class="t" style="left:885px;top:131.85px;font-size:4.4px;color:#a4a4a4;">Color Correction</div>
<div style="left:880px;top:145.29999999999998px;width:124px;height:0.4px;background:#1c1c1c;"></div>
<svg style="left:880.6px;top:140.1px" width="3" height="4" viewBox="0 0 3 4"><path d="M0.8 0.6L2.2 2L0.8 3.4" stroke="#9a9a9a" stroke-width="0.55" fill="none"/></svg>
<div class="t" style="left:885px;top:138.60px;font-size:4.4px;color:#a4a4a4;">Distort</div>
<div style="left:880px;top:152.04999999999998px;width:124px;height:0.4px;background:#1c1c1c;"></div>
<svg style="left:880.6px;top:146.85px" width="3" height="4" viewBox="0 0 3 4"><path d="M0.8 0.6L2.2 2L0.8 3.4" stroke="#9a9a9a" stroke-width="0.55" fill="none"/></svg>
<div class="t" style="left:885px;top:145.35px;font-size:4.4px;color:#a4a4a4;">Expression Controls</div>
<div style="left:880px;top:158.79999999999998px;width:124px;height:0.4px;background:#1c1c1c;"></div>
<svg style="left:880.6px;top:153.6px" width="3" height="4" viewBox="0 0 3 4"><path d="M0.8 0.6L2.2 2L0.8 3.4" stroke="#9a9a9a" stroke-width="0.55" fill="none"/></svg>
<div class="t" style="left:885px;top:152.10px;font-size:4.4px;color:#a4a4a4;">Generate</div>
<div style="left:880px;top:165.54999999999998px;width:124px;height:0.4px;background:#1c1c1c;"></div>
<svg style="left:880.6px;top:160.35px" width="3" height="4" viewBox="0 0 3 4"><path d="M0.8 0.6L2.2 2L0.8 3.4" stroke="#9a9a9a" stroke-width="0.55" fill="none"/></svg>
<div class="t" style="left:885px;top:158.85px;font-size:4.4px;color:#a4a4a4;">Immersive Video</div>
<div style="left:880px;top:172.29999999999998px;width:124px;height:0.4px;background:#1c1c1c;"></div>
<svg style="left:880.6px;top:167.1px" width="3" height="4" viewBox="0 0 3 4"><path d="M0.8 0.6L2.2 2L0.8 3.4" stroke="#9a9a9a" stroke-width="0.55" fill="none"/></svg>
<div class="t" style="left:885px;top:165.60px;font-size:4.4px;color:#a4a4a4;">Keying</div>
<div style="left:880px;top:179.04999999999998px;width:124px;height:0.4px;background:#1c1c1c;"></div>
<svg style="left:880.6px;top:173.85px" width="3" height="4" viewBox="0 0 3 4"><path d="M0.8 0.6L2.2 2L0.8 3.4" stroke="#9a9a9a" stroke-width="0.55" fill="none"/></svg>
<div class="t" style="left:885px;top:172.35px;font-size:4.4px;color:#a4a4a4;">Matte</div>
<div style="left:880px;top:185.79999999999998px;width:124px;height:0.4px;background:#1c1c1c;"></div>
<svg style="left:880.6px;top:180.6px" width="3" height="4" viewBox="0 0 3 4"><path d="M0.8 0.6L2.2 2L0.8 3.4" stroke="#9a9a9a" stroke-width="0.55" fill="none"/></svg>
<div class="t" style="left:885px;top:179.10px;font-size:4.4px;color:#a4a4a4;">Noise &amp; Grain</div>
<div style="left:880px;top:192.54999999999998px;width:124px;height:0.4px;background:#1c1c1c;"></div>
<svg style="left:880.6px;top:187.35px" width="3" height="4" viewBox="0 0 3 4"><path d="M0.8 0.6L2.2 2L0.8 3.4" stroke="#9a9a9a" stroke-width="0.55" fill="none"/></svg>
<div class="t" style="left:885px;top:185.85px;font-size:4.4px;color:#a4a4a4;">Obsolete</div>
<div style="left:880px;top:199.29999999999998px;width:124px;height:0.4px;background:#1c1c1c;"></div>
<svg style="left:880.6px;top:194.1px" width="3" height="4" viewBox="0 0 3 4"><path d="M0.8 0.6L2.2 2L0.8 3.4" stroke="#9a9a9a" stroke-width="0.55" fill="none"/></svg>
<div class="t" style="left:885px;top:192.60px;font-size:4.4px;color:#a4a4a4;">Perspective</div>
<div style="left:880px;top:206.04999999999998px;width:124px;height:0.4px;background:#1c1c1c;"></div>
<svg style="left:880.6px;top:200.85px" width="3" height="4" viewBox="0 0 3 4"><path d="M0.8 0.6L2.2 2L0.8 3.4" stroke="#9a9a9a" stroke-width="0.55" fill="none"/></svg>
<div class="t" style="left:885px;top:199.35px;font-size:4.4px;color:#a4a4a4;">Simulation</div>
<div style="left:880px;top:212.79999999999998px;width:124px;height:0.4px;background:#1c1c1c;"></div>
<svg style="left:880.6px;top:207.6px" width="3" height="4" viewBox="0 0 3 4"><path d="M0.8 0.6L2.2 2L0.8 3.4" stroke="#9a9a9a" stroke-width="0.55" fill="none"/></svg>
<div class="t" style="left:885px;top:206.10px;font-size:4.4px;color:#a4a4a4;">Stylize</div>
<div style="left:880px;top:219.54999999999998px;width:124px;height:0.4px;background:#1c1c1c;"></div>
<svg style="left:880.6px;top:214.35px" width="3" height="4" viewBox="0 0 3 4"><path d="M0.8 0.6L2.2 2L0.8 3.4" stroke="#9a9a9a" stroke-width="0.55" fill="none"/></svg>
<div class="t" style="left:885px;top:212.85px;font-size:4.4px;color:#a4a4a4;">Text</div>
<div style="left:880px;top:226.29999999999998px;width:124px;height:0.4px;background:#1c1c1c;"></div>
<svg style="left:880.6px;top:221.1px" width="3" height="4" viewBox="0 0 3 4"><path d="M0.8 0.6L2.2 2L0.8 3.4" stroke="#9a9a9a" stroke-width="0.55" fill="none"/></svg>
<div class="t" style="left:885px;top:219.60px;font-size:4.4px;color:#a4a4a4;">Time</div>
<div style="left:880px;top:233.04999999999998px;width:124px;height:0.4px;background:#1c1c1c;"></div>
<svg style="left:880.6px;top:227.85px" width="3" height="4" viewBox="0 0 3 4"><path d="M0.8 0.6L2.2 2L0.8 3.4" stroke="#9a9a9a" stroke-width="0.55" fill="none"/></svg>
<div class="t" style="left:885px;top:226.35px;font-size:4.4px;color:#a4a4a4;">Transition</div>
<div style="left:880px;top:239.79999999999998px;width:124px;height:0.4px;background:#1c1c1c;"></div>
<svg style="left:880.6px;top:234.6px" width="3" height="4" viewBox="0 0 3 4"><path d="M0.8 0.6L2.2 2L0.8 3.4" stroke="#9a9a9a" stroke-width="0.55" fill="none"/></svg>
<div class="t" style="left:885px;top:233.10px;font-size:4.4px;color:#a4a4a4;">Utility</div>
<div style="left:1004.4px;top:28.3px;width:3.6px;height:240px;background:#1e1e1e;"></div>
<div style="left:1005px;top:30px;width:2px;height:182px;background:#252525;"></div>
<div style="left:880px;top:238.8px;width:124px;height:8.2px;background:#232323;"></div>
<svg style="left:997px;top:240.5px" width="5" height="5" viewBox="0 0 5 5"><rect x="0.5" y="0.5" width="4" height="4" fill="#bdbdbd"/><path d="M1.2 2H3.8M1.2 3.2H3.8" stroke="#555" stroke-width="0.4"/></svg>
<div style="left:880px;top:247.8px;width:124px;height:10.5px;background:#232323;"></div>
<div class="t" style="left:883.7px;top:249.80px;font-size:4.35px;color:#9c9c9c;">Align</div>
<div style="left:880px;top:259.2px;width:124px;height:8.4px;background:#232323;"></div>
<div class="t" style="left:883.7px;top:261.50px;font-size:4.35px;color:#9c9c9c;">Libraries</div>
<div style="left:0px;top:269.5px;width:1008px;height:133px;background:#232323;"></div>
<div style="left:10.5px;top:273px;width:4px;height:4px;background:#d6c4a2;"></div>
<div class="t" style="left:19px;top:271.70px;font-size:4.35px;color:#6a6a6a;">Morphing rectangle to triangle</div>
<div class="t" style="left:94px;top:271.50px;font-size:4.5px;color:#9a9a9a;">&#215;</div>
<div style="left:100.3px;top:273px;width:4px;height:4px;background:#d8c6a8;"></div>
<div class="t" style="left:109px;top:271.70px;font-size:4.35px;color:#c0c0c0;">Morphing triangle to rocket</div>
<svg style="left:166.5px;top:273.5px" width="4" height="4" viewBox="0 0 4 4"><path d="M0 0.5H3.5M0 2H3.5M0 3.5H3.5" stroke="#777" stroke-width="0.6"/></svg>
<div style="left:94px;top:279px;width:76px;height:0.7px;background:#b4b4b4;"></div>
<div style="left:0px;top:280.3px;width:232.4px;height:0.5px;background:#1c1c1c;"></div>
<div class="t" style="left:6.9px;top:281.40px;font-size:6.2px;color:#3d8ee0;">0:00:00:10</div>
<div class="t" style="left:5px;top:287.10px;font-size:3.2px;color:#2a5a8a;">00010 (30.00 fps)</div>
<div style="left:43px;top:283.7px;width:110px;height:6px;background:#191919;"></div>
<svg style="left:45px;top:284px" width="6" height="6" viewBox="0 0 6 6"><circle cx="3.2" cy="2.3" r="1.5" stroke="#bdbdbd" stroke-width="0.5" fill="none"/><path d="M2.2 3.3L0.8 4.8M3.5 4.8H5" stroke="#bdbdbd" stroke-width="0.6"/></svg>
<svg style="left:159.2px;top:283px" width="8" height="8" viewBox="-4 -4 8 8"><path d="M-3 -2.5H1L3 2.5M-1 -2.5L2 1" stroke="#c0c0c0" stroke-width="0.7" fill="none"/></svg>
<svg style="left:172px;top:283px" width="8" height="8" viewBox="-4 -4 8 8"><circle cx="-1.5" cy="-1.5" r="1.2" fill="#c0c0c0"/><rect x="-0.5" y="-0.5" width="3.2" height="3" fill="none" stroke="#c0c0c0" stroke-width="0.6"/></svg>
<svg style="left:184.9px;top:283px" width="8" height="8" viewBox="-4 -4 8 8"><path d="M-3 0L0 -3L3 0V3H-3Z" fill="#2c7fd6"/></svg>
<svg style="left:195.5px;top:283px" width="8" height="8" viewBox="-4 -4 8 8"><rect x="-2.5" y="-2.5" width="4" height="4.5" fill="#c0c0c0"/><rect x="-1" y="-1" width="4" height="4" fill="none" stroke="#c0c0c0" stroke-width="0.5"/></svg>
<svg style="left:205.5px;top:283px" width="8" height="8" viewBox="-4 -4 8 8"><path d="M-2.5 2L2 -2.5M-2 -0.5L0.5 -3" stroke="#c0c0c0" stroke-width="1.2"/></svg>
<svg style="left:219.2px;top:283px" width="8" height="8" viewBox="-4 -4 8 8"><rect x="-2.8" y="-2.8" width="5.6" height="5.6" fill="none" stroke="#c0c0c0" stroke-width="0.6"/><path d="M-1 -1L1.5 1.5" stroke="#c0c0c0" stroke-width="0.6"/></svg>
<div style="left:0px;top:294.5px;width:232.4px;height:7.2px;background:#2a2a2a;"></div>
<svg style="left:2.4px;top:296.5px" width="5" height="4" viewBox="0 0 5 4"><path d="M0.3 2Q2.5 -0.2 4.7 2Q2.5 4.2 0.3 2Z" fill="none" stroke="#c8c8c8" stroke-width="0.6"/><circle cx="2.5" cy="2" r="0.9" fill="#c8c8c8"/></svg>
<svg style="left:8.5px;top:296.2px" width="5" height="5" viewBox="0 0 5 5"><circle cx="2.5" cy="2.5" r="2" fill="#bbb"/><path d="M2.5 0.5V4.5" stroke="#2a2a2a" stroke-width="0.5"/></svg>
<svg style="left:15px;top:297px" width="4" height="4" viewBox="0 0 4 4"><circle cx="2" cy="2" r="1.3" fill="#bbb"/></svg>
<svg style="left:20.5px;top:296.2px" width="4" height="5" viewBox="0 0 4 5"><rect x="0.3" y="2" width="3.4" height="2.6" fill="#bbb"/><path d="M0.9 2.1V1.2A1.1 1.1 0 0 1 3.1 1.2V2.1" stroke="#bbb" stroke-width="0.5" fill="none"/></svg>
<svg style="left:33px;top:296px" width="5" height="5" viewBox="0 0 5 5"><path d="M0.5 0.5H2.8L4.5 2.5L2.5 4.5L0.5 2.5Z" fill="#bbb"/></svg>
<div class="t" style="left:42px;top:295.10px;font-size:4px;color:#777;">#</div>
<div class="t" style="left:55px;top:295.10px;font-size:4.2px;color:#7a7a7a;">Source Name</div>
<svg style="left:128.3px;top:296px" width="5" height="5" viewBox="0 0 5 5"><path d="M0.5 4.2Q0.8 1.6 2.5 0.8Q4.2 1.6 4.5 4.2Z" fill="#c0c0c0"/></svg>
<svg style="left:134.1px;top:296px" width="5" height="5" viewBox="0 0 5 5"><circle cx="2.5" cy="2.5" r="1.1" fill="#b0b0b0"/><path d="M2.5 0.3V1M2.5 4V4.7M0.3 2.5H1M4 2.5H4.7" stroke="#b0b0b0" stroke-width="0.5"/></svg>
<svg style="left:140.1px;top:296px" width="5" height="5" viewBox="0 0 5 5"><path d="M0.8 0.8L4.2 4.2" stroke="#c0c0c0" stroke-width="0.7"/></svg>
<svg style="left:145.9px;top:296px" width="5" height="5" viewBox="0 0 5 5"><path d="M1.6 4.5L2.4 0.8H3.6M1.2 2.3H3" stroke="#c0c0c0" stroke-width="0.55" fill="none"/><path d="M3.4 4.4L4.6 2.2" stroke="#c0c0c0" stroke-width="0.5"/></svg>
<svg style="left:152.1px;top:296px" width="5" height="5" viewBox="0 0 5 5"><rect x="0.7" y="1" width="3.6" height="3.2" rx="0.6" fill="#c8c8c8"/><path d="M1.2 1V0.5H3.8" stroke="#888" stroke-width="0.4"/></svg>
<svg style="left:158.1px;top:296px" width="5" height="5" viewBox="0 0 5 5"><ellipse cx="2.5" cy="2.5" rx="2" ry="1.6" fill="none" stroke="#b0b0b0" stroke-width="0.6"/><path d="M1 4L4 1" stroke="#b0b0b0" stroke-width="0.5"/></svg>
<svg style="left:164.1px;top:296px" width="5" height="5" viewBox="0 0 5 5"><circle cx="2.5" cy="2.5" r="1.9" fill="none" stroke="#c8c8c8" stroke-width="0.6"/><path d="M2.5 0.6A1.9 1.9 0 0 1 2.5 4.4Z" fill="#c8c8c8"/></svg>
<svg style="left:170.1px;top:296px" width="5" height="5" viewBox="0 0 5 5"><circle cx="2.5" cy="2.5" r="1.9" fill="none" stroke="#b0b0b0" stroke-width="0.6"/><circle cx="2.5" cy="2.5" r="0.7" fill="#b0b0b0"/></svg>
<div style="left:178px;top:294.5px;width:47px;height:7.2px;background:#2e2e2e;"></div>
<div class="t" style="left:183px;top:295.10px;font-size:4.0px;color:#8a8a8a;">Parent &amp; Link</div>
<div style="left:0px;top:301.90000000000003px;width:232.4px;height:6.8px;background:#2c2c2c;"></div>
<div style="left:0px;top:308.7px;width:232.4px;height:0.5px;background:#1c1c1c;"></div>
<svg style="left:2.4px;top:303.3px" width="5" height="4" viewBox="0 0 5 4"><path d="M0.3 2Q2.5 -0.2 4.7 2Q2.5 4.2 0.3 2Z" fill="none" stroke="#c8c8c8" stroke-width="0.6"/><circle cx="2.5" cy="2" r="0.9" fill="#c8c8c8"/></svg>
<div style="left:8.2px;top:302.3px;width:5.6px;height:6px;background:#323232;"></div>
<div style="left:14.6px;top:302.3px;width:5.6px;height:6px;background:#323232;"></div>
<div style="left:21px;top:302.3px;width:5.6px;height:6px;background:#323232;"></div>
<svg style="left:29.6px;top:303.8px" width="4" height="3" viewBox="0 0 4 3"><path d="M0.6 0.6L2 2.2L3.4 0.6" stroke="#9a9a9a" stroke-width="0.55" fill="none"/></svg>
<div style="left:34px;top:302.8px;width:4.8px;height:5px;background:#7586ea;"></div>
<div class="t" style="left:43.2px;top:301.80px;font-size:4.2px;color:#8a8a8a;">1</div>
<svg style="left:54px;top:302.8px" width="5" height="5" viewBox="0 0 5 5"><path d="M2.5 0.2L3.2 1.8L4.9 1.9L3.6 3L4 4.7L2.5 3.8L1 4.7L1.4 3L0.1 1.9L1.8 1.8Z" fill="#d0d0d0"/></svg>
<div style="left:60px;top:302.3px;width:65.6px;height:5.2px;border:0.7px solid #9a9a9a;background:#262626;border-radius:0.6px"></div>
<div class="t" style="left:61.7px;top:301.80px;font-size:4.35px;color:#c8c8c8;">rocket Outlines</div>
<svg style="left:128.6px;top:302.8px" width="5" height="5" viewBox="0 0 5 5"><path d="M0.6 4L2.5 0.9L4.4 4Z" fill="#b0b0b0"/></svg>
<svg style="left:134.6px;top:302.8px" width="5" height="5" viewBox="0 0 5 5"><circle cx="2.5" cy="2.5" r="1" fill="#8a8a8a"/></svg>
<svg style="left:140.6px;top:302.8px" width="5" height="5" viewBox="0 0 5 5"><path d="M0.8 4.2L4.2 0.8" stroke="#c0c0c0" stroke-width="0.8"/></svg>
<div class="t" style="left:146.6px;top:301.80px;font-size:4.4px;color:#9a9a9a;"><i>f/</i></div>
<div style="left:152.3px;top:302.3px;width:5.4px;height:6px;background:#323232;"></div>
<div style="left:158.3px;top:302.3px;width:5.4px;height:6px;background:#323232;"></div>
<div style="left:164.3px;top:302.3px;width:5.4px;height:6px;background:#323232;"></div>
<div style="left:170.3px;top:302.3px;width:5.4px;height:6px;background:#323232;"></div>
<div style="left:176px;top:302.3px;width:14.5px;height:6px;background:#2c2c2c;"></div>
<svg style="left:181.8px;top:302.8px" width="5" height="5" viewBox="0 0 5 5"><circle cx="2.5" cy="2.5" r="1.9" fill="none" stroke="#a8a8a8" stroke-width="0.7"/><path d="M1.6 2.5A0.9 0.9 0 0 1 3.4 2.5" stroke="#a8a8a8" stroke-width="0.5" fill="none"/></svg>
<div style="left:190.6px;top:302.3px;width:34px;height:6px;background:#1c1c1c;"></div>
<div class="t" style="left:193.2px;top:301.80px;font-size:4.35px;color:#d0d0d0;">None</div>
<svg style="left:219.5px;top:304.1px" width="3.5" height="2.5" viewBox="0 0 3.5 2.5"><path d="M0.3 0.5L1.7 1.9L3.1 0.5" stroke="#a0a0a0" stroke-width="0.55" fill="none"/></svg>
<div style="left:224.6px;top:302.3px;width:7.8px;height:6px;background:#323232;"></div>
<svg style="left:47.8px;top:309.8px" width="5" height="5" viewBox="0 0 5 5"><circle cx="2.5" cy="2.8" r="1.8" fill="none" stroke="#b0b0b0" stroke-width="0.6"/><path d="M2.5 0.4V1M2.5 2.8L3.3 2.1" stroke="#b0b0b0" stroke-width="0.6"/></svg>
<div class="t" style="left:55.7px;top:308.80px;font-size:4.35px;color:#a8a8a8;">Opacity</div>
<div class="t" style="left:128.8px;top:308.80px;font-size:4.35px;color:#2f7ed0;">74</div>
<div class="t" style="left:134.6px;top:308.80px;font-size:4.35px;color:#9a9a9a;">%</div>
<svg style="left:187.7px;top:309.8px" width="5" height="5" viewBox="0 0 5 5"><circle cx="2.5" cy="2.5" r="1.9" fill="none" stroke="#8a8a8a" stroke-width="0.7"/><path d="M1.6 2.5A0.9 0.9 0 0 1 3.4 2.5" stroke="#8a8a8a" stroke-width="0.5" fill="none"/></svg>
<div style="left:0px;top:315.5px;width:232.4px;height:6.8px;background:#242424;"></div>
<div style="left:0px;top:322.29999999999995px;width:232.4px;height:0.5px;background:#1c1c1c;"></div>
<svg style="left:2.4px;top:316.9px" width="5" height="4" viewBox="0 0 5 4"><path d="M0.3 2Q2.5 -0.2 4.7 2Q2.5 4.2 0.3 2Z" fill="none" stroke="#c8c8c8" stroke-width="0.6"/><circle cx="2.5" cy="2" r="0.9" fill="#c8c8c8"/></svg>
<div style="left:8.2px;top:315.9px;width:5.6px;height:6px;background:#2a2a2a;"></div>
<div style="left:14.6px;top:315.9px;width:5.6px;height:6px;background:#2a2a2a;"></div>
<div style="left:21px;top:315.9px;width:5.6px;height:6px;background:#2a2a2a;"></div>
<svg style="left:29.6px;top:317.4px" width="4" height="3" viewBox="0 0 4 3"><path d="M0.6 0.6L2 2.2L3.4 0.6" stroke="#9a9a9a" stroke-width="0.55" fill="none"/></svg>
<div style="left:34px;top:316.4px;width:4.8px;height:5px;background:#7586ea;"></div>
<div class="t" style="left:43.2px;top:315.40px;font-size:4.2px;color:#8a8a8a;">2</div>
<svg style="left:54px;top:316.4px" width="5" height="5" viewBox="0 0 5 5"><path d="M2.5 0.2L3.2 1.8L4.9 1.9L3.6 3L4 4.7L2.5 3.8L1 4.7L1.4 3L0.1 1.9L1.8 1.8Z" fill="#d0d0d0"/></svg>
<div class="t" style="left:61.7px;top:315.40px;font-size:4.35px;color:#c8c8c8;">Shape Layer 1</div>
<svg style="left:128.6px;top:316.4px" width="5" height="5" viewBox="0 0 5 5"><path d="M0.6 4L2.5 0.9L4.4 4Z" fill="#b0b0b0"/></svg>
<svg style="left:134.6px;top:316.4px" width="5" height="5" viewBox="0 0 5 5"><circle cx="2.5" cy="2.5" r="1" fill="#8a8a8a"/></svg>
<svg style="left:140.6px;top:316.4px" width="5" height="5" viewBox="0 0 5 5"><path d="M0.8 4.2L4.2 0.8" stroke="#c0c0c0" stroke-width="0.8"/></svg>
<div style="left:152.3px;top:315.9px;width:5.4px;height:6px;background:#2a2a2a;"></div>
<div style="left:158.3px;top:315.9px;width:5.4px;height:6px;background:#2a2a2a;"></div>
<div style="left:164.3px;top:315.9px;width:5.4px;height:6px;background:#2a2a2a;"></div>
<div style="left:170.3px;top:315.9px;width:5.4px;height:6px;background:#2a2a2a;"></div>
<div style="left:176px;top:315.9px;width:14.5px;height:6px;background:#242424;"></div>
<svg style="left:181.8px;top:316.4px" width="5" height="5" viewBox="0 0 5 5"><circle cx="2.5" cy="2.5" r="1.9" fill="none" stroke="#a8a8a8" stroke-width="0.7"/><path d="M1.6 2.5A0.9 0.9 0 0 1 3.4 2.5" stroke="#a8a8a8" stroke-width="0.5" fill="none"/></svg>
<div style="left:190.6px;top:315.9px;width:34px;height:6px;background:#1c1c1c;"></div>
<div class="t" style="left:193.2px;top:315.40px;font-size:4.35px;color:#d0d0d0;">None</div>
<svg style="left:219.5px;top:317.7px" width="3.5" height="2.5" viewBox="0 0 3.5 2.5"><path d="M0.3 0.5L1.7 1.9L3.1 0.5" stroke="#a0a0a0" stroke-width="0.55" fill="none"/></svg>
<div style="left:224.6px;top:315.9px;width:7.8px;height:6px;background:#2a2a2a;"></div>
<svg style="left:47.8px;top:323.2px" width="5" height="5" viewBox="0 0 5 5"><circle cx="2.5" cy="2.8" r="1.8" fill="none" stroke="#b0b0b0" stroke-width="0.6"/><path d="M2.5 0.4V1M2.5 2.8L3.3 2.1" stroke="#b0b0b0" stroke-width="0.6"/></svg>
<div class="t" style="left:55.7px;top:322.20px;font-size:4.35px;color:#a8a8a8;">Opacity</div>
<div class="t" style="left:128.8px;top:322.20px;font-size:4.35px;color:#2f7ed0;">77</div>
<div class="t" style="left:134.6px;top:322.20px;font-size:4.35px;color:#9a9a9a;">%</div>
<svg style="left:187.7px;top:323.2px" width="5" height="5" viewBox="0 0 5 5"><circle cx="2.5" cy="2.5" r="1.9" fill="none" stroke="#8a8a8a" stroke-width="0.7"/><path d="M1.6 2.5A0.9 0.9 0 0 1 3.4 2.5" stroke="#8a8a8a" stroke-width="0.5" fill="none"/></svg>
<div style="left:232px;top:280.3px;width:2px;height:122.5px;background:#1b1b1b;"></div>
<div style="left:234px;top:280.3px;width:766px;height:122.5px;background:#323232;"></div>
<div style="left:234px;top:329px;width:4.5px;height:74px;background:#2c2c2c;"></div>
<div style="left:234px;top:280.3px;width:766px;height:2.8px;background:#232323;"></div>
<div style="left:234px;top:283px;width:766px;height:3px;background:#6e6e6e;"></div>
<div style="left:234px;top:286px;width:766px;height:8.3px;background:#1e1e1e;"></div>
<div style="left:234px;top:294.3px;width:766px;height:5.8px;background:#666666;"></div>
<div style="left:234px;top:300px;width:766px;height:1.5px;background:#178017;"></div>
<div style="left:236px;top:301.4px;width:764px;height:6.8px;background:linear-gradient(#6676da,#5868d2);"></div>
<div style="left:236px;top:308.2px;width:764px;height:1.1px;background:#262a36;"></div>
<div style="left:234px;top:309.3px;width:766px;height:5.9px;background:#323236;"></div>
<div style="left:236px;top:315.2px;width:764px;height:7px;background:linear-gradient(#5a609c,#545a92);"></div>
<div style="left:236px;top:322.2px;width:764px;height:0.9px;background:#262a35;"></div>
<div style="left:234px;top:323.1px;width:766px;height:5.9px;background:#313131;"></div>
<div style="left:1000px;top:280.3px;width:8px;height:122.5px;background:#252525;"></div>
<div class="t" style="left:236.3px;top:285.70px;font-size:3.6px;color:#b0b0b0;">:00f</div>
<div style="left:236.8px;top:291.8px;width:0.6px;height:1.8px;background:#6a6a6a;"></div>
<div class="t" style="left:259.1px;top:285.70px;font-size:3.6px;color:#a0a0a0;">05f</div>
<div style="left:262.1px;top:291.8px;width:0.6px;height:1.8px;background:#6a6a6a;"></div>
<div class="t" style="left:284.40000000000003px;top:285.70px;font-size:3.6px;color:#a0a0a0;">10f</div>
<div style="left:287.40000000000003px;top:291.8px;width:0.6px;height:1.8px;background:#6a6a6a;"></div>
<div class="t" style="left:309.70000000000005px;top:285.70px;font-size:3.6px;color:#a0a0a0;">15f</div>
<div style="left:312.70000000000005px;top:291.8px;width:0.6px;height:1.8px;background:#6a6a6a;"></div>
<div class="t" style="left:335.0px;top:285.70px;font-size:3.6px;color:#a0a0a0;">20f</div>
<div style="left:338.0px;top:291.8px;width:0.6px;height:1.8px;background:#6a6a6a;"></div>
<div class="t" style="left:360.3px;top:285.70px;font-size:3.6px;color:#a0a0a0;">25f</div>
<div style="left:363.3px;top:291.8px;width:0.6px;height:1.8px;background:#6a6a6a;"></div>
<div class="t" style="left:382.6px;top:285.70px;font-size:3.6px;color:#a0a0a0;">01:00f</div>
<div style="left:388.6px;top:291.8px;width:0.6px;height:1.8px;background:#6a6a6a;"></div>
<div class="t" style="left:410.90000000000003px;top:285.70px;font-size:3.6px;color:#a0a0a0;">05f</div>
<div style="left:413.90000000000003px;top:291.8px;width:0.6px;height:1.8px;background:#6a6a6a;"></div>
<div class="t" style="left:436.20000000000005px;top:285.70px;font-size:3.6px;color:#a0a0a0;">10f</div>
<div style="left:439.20000000000005px;top:291.8px;width:0.6px;height:1.8px;background:#6a6a6a;"></div>
<div class="t" style="left:461.5px;top:285.70px;font-size:3.6px;color:#a0a0a0;">15f</div>
<div style="left:464.5px;top:291.8px;width:0.6px;height:1.8px;background:#6a6a6a;"></div>
<div class="t" style="left:486.80000000000007px;top:285.70px;font-size:3.6px;color:#a0a0a0;">20f</div>
<div style="left:489.80000000000007px;top:291.8px;width:0.6px;height:1.8px;background:#6a6a6a;"></div>
<div class="t" style="left:512.1px;top:285.70px;font-size:3.6px;color:#a0a0a0;">25f</div>
<div style="left:515.1px;top:291.8px;width:0.6px;height:1.8px;background:#6a6a6a;"></div>
<div class="t" style="left:534.4000000000001px;top:285.70px;font-size:3.6px;color:#a0a0a0;">02:00f</div>
<div style="left:540.4000000000001px;top:291.8px;width:0.6px;height:1.8px;background:#6a6a6a;"></div>
<div class="t" style="left:562.7px;top:285.70px;font-size:3.6px;color:#a0a0a0;">05f</div>
<div style="left:565.7px;top:291.8px;width:0.6px;height:1.8px;background:#6a6a6a;"></div>
<div class="t" style="left:588.0px;top:285.70px;font-size:3.6px;color:#a0a0a0;">10f</div>
<div style="left:591.0px;top:291.8px;width:0.6px;height:1.8px;background:#6a6a6a;"></div>
<div class="t" style="left:613.3000000000001px;top:285.70px;font-size:3.6px;color:#a0a0a0;">15f</div>
<div style="left:616.3000000000001px;top:291.8px;width:0.6px;height:1.8px;background:#6a6a6a;"></div>
<div class="t" style="left:638.6000000000001px;top:285.70px;font-size:3.6px;color:#a0a0a0;">20f</div>
<div style="left:641.6000000000001px;top:291.8px;width:0.6px;height:1.8px;background:#6a6a6a;"></div>
<div class="t" style="left:663.9000000000001px;top:285.70px;font-size:3.6px;color:#a0a0a0;">25f</div>
<div style="left:666.9000000000001px;top:291.8px;width:0.6px;height:1.8px;background:#6a6a6a;"></div>
<div class="t" style="left:686.2px;top:285.70px;font-size:3.6px;color:#a0a0a0;">03:00f</div>
<div style="left:692.2px;top:291.8px;width:0.6px;height:1.8px;background:#6a6a6a;"></div>
<div class="t" style="left:714.5px;top:285.70px;font-size:3.6px;color:#a0a0a0;">05f</div>
<div style="left:717.5px;top:291.8px;width:0.6px;height:1.8px;background:#6a6a6a;"></div>
<div class="t" style="left:739.8000000000001px;top:285.70px;font-size:3.6px;color:#a0a0a0;">10f</div>
<div style="left:742.8000000000001px;top:291.8px;width:0.6px;height:1.8px;background:#6a6a6a;"></div>
<div class="t" style="left:765.1000000000001px;top:285.70px;font-size:3.6px;color:#a0a0a0;">15f</div>
<div style="left:768.1000000000001px;top:291.8px;width:0.6px;height:1.8px;background:#6a6a6a;"></div>
<div class="t" style="left:790.4000000000001px;top:285.70px;font-size:3.6px;color:#a0a0a0;">20f</div>
<div style="left:793.4000000000001px;top:291.8px;width:0.6px;height:1.8px;background:#6a6a6a;"></div>
<div class="t" style="left:815.7px;top:285.70px;font-size:3.6px;color:#a0a0a0;">25f</div>
<div style="left:818.7px;top:291.8px;width:0.6px;height:1.8px;background:#6a6a6a;"></div>
<div class="t" style="left:838.0px;top:285.70px;font-size:3.6px;color:#a0a0a0;">04:00f</div>
<div style="left:844.0px;top:291.8px;width:0.6px;height:1.8px;background:#6a6a6a;"></div>
<div class="t" style="left:866.3000000000002px;top:285.70px;font-size:3.6px;color:#a0a0a0;">05f</div>
<div style="left:869.3000000000002px;top:291.8px;width:0.6px;height:1.8px;background:#6a6a6a;"></div>
<div class="t" style="left:891.6000000000001px;top:285.70px;font-size:3.6px;color:#a0a0a0;">10f</div>
<div style="left:894.6000000000001px;top:291.8px;width:0.6px;height:1.8px;background:#6a6a6a;"></div>
<div class="t" style="left:916.9000000000001px;top:285.70px;font-size:3.6px;color:#a0a0a0;">15f</div>
<div style="left:919.9000000000001px;top:291.8px;width:0.6px;height:1.8px;background:#6a6a6a;"></div>
<div class="t" style="left:942.2px;top:285.70px;font-size:3.6px;color:#a0a0a0;">20f</div>
<div style="left:945.2px;top:291.8px;width:0.6px;height:1.8px;background:#6a6a6a;"></div>
<div class="t" style="left:967.5px;top:285.70px;font-size:3.6px;color:#a0a0a0;">25f</div>
<div style="left:970.5px;top:291.8px;width:0.6px;height:1.8px;background:#6a6a6a;"></div>
<div class="t" style="left:993px;top:285.70px;font-size:3.6px;color:#c0c0c0;">05:00f</div>
<div style="left:995.8000000000002px;top:291.8px;width:0.6px;height:1.8px;background:#6a6a6a;"></div>
<div style="left:288px;top:301.4px;width:4.2px;height:101.4px;background:rgba(255,255,255,0.09);"></div>
<div style="left:284.8px;top:329px;width:2.1px;height:73.8px;background:rgba(60,80,130,0.18);"></div>
<div style="left:286.9px;top:294px;width:1.1px;height:108.8px;background:rgba(120,160,210,0.45);"></div>
<div style="left:287.3px;top:283px;width:0.8px;height:3px;background:rgba(255,255,255,0.25);"></div>
<svg style="left:283.9px;top:287.4px" width="7" height="7" viewBox="0 0 7 7"><path d="M0.4 0.4H6.4V2.6L3.4 6.6L0.4 2.6Z" fill="#4a96e4"/><path d="M2.2 1.6H4.6L3.4 3.6Z" fill="#2a5a90"/></svg>
<div style="left:286.5px;top:310px;width:1.6px;height:4.2px;background:#d8d8d8;"></div>
<div style="left:286.5px;top:323.5px;width:1.6px;height:4.2px;background:#d8d8d8;"></div>
<div style="left:234px;top:283px;width:2px;height:3px;background:#4a9ae8;"></div>
<div style="left:234px;top:294.3px;width:2px;height:5.8px;background:#4a9ae8;"></div>
<div style="left:999px;top:283px;width:3px;height:3px;background:#4a9ae8;"></div>
<div style="left:999px;top:294.3px;width:3px;height:5.8px;background:#4a9ae8;"></div>
<svg style="left:1003px;top:294px" width="5" height="8" viewBox="0 0 5 8"><path d="M0.3 1H5V4.5L2.6 6.5L0.3 4.5Z" fill="#d8d8d8"/></svg>
<div style="left:0px;top:402.8px;width:1008px;height:5.2px;background:#1f1f1f;"></div>
<svg style="left:2.5px;top:403.3px" width="5" height="5" viewBox="0 0 5 5"><rect x="0.5" y="0.5" width="4" height="4" fill="#2a6fb5"/></svg>
<svg style="left:9.5px;top:403.3px" width="5" height="5" viewBox="0 0 5 5"><circle cx="2.5" cy="2.8" r="1.8" fill="#aaa"/></svg>
<svg style="left:16.5px;top:403.3px" width="5" height="5" viewBox="0 0 5 5"><circle cx="2.5" cy="2.8" r="1.8" fill="#888"/></svg>
<div class="t" style="left:130px;top:402.30px;font-size:4.0px;color:#8a8a8a;">Toggle Switches / Modes</div>
<svg style="left:236px;top:403px" width="5" height="5" viewBox="0 0 5 5"><path d="M0.5 2.5H4.5M2.5 0.5V4.5" stroke="#aaa" stroke-width="0.7"/></svg>
<svg style="left:243px;top:403px" width="5" height="5" viewBox="0 0 5 5"><circle cx="2.5" cy="2.5" r="1.5" stroke="#aaa" stroke-width="0.6" fill="none"/></svg>
<div style="left:250px;top:405px;width:14px;height:1px;background:#555;"></div>
<svg style="left:267px;top:403px" width="6" height="5" viewBox="0 0 6 5"><path d="M0.5 4.5L3 1L5.5 4.5Z" fill="#aaa"/></svg>
</div></body></html>
